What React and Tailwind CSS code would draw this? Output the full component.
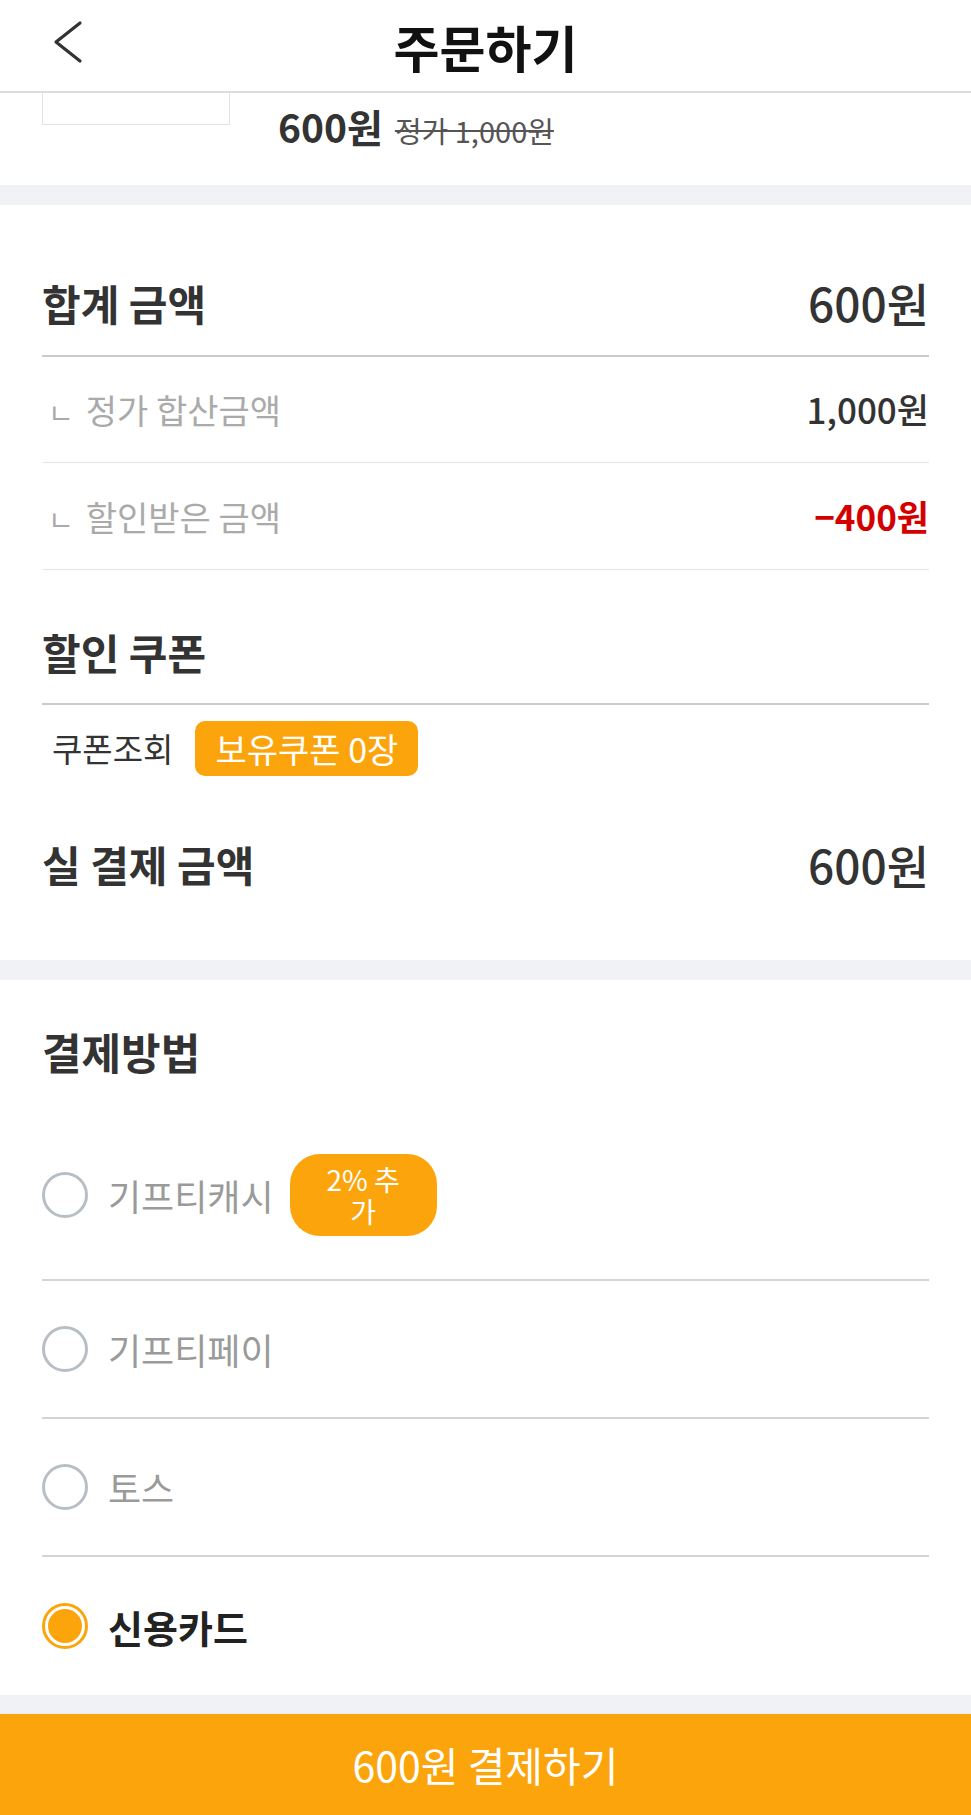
const ORANGE = "bg-[#fca40c]";

const Radio = ({ checked }) =>
    checked ? (
        <span className="w-[46px] h-[46px] rounded-full border-[3px] border-[#fca40c] p-[3px] bg-white shrink-0">
            <span className="block w-full h-full rounded-full bg-[#fca40c]" />
        </span>
    ) : (
        <span className="w-[46px] h-[46px] rounded-full border-[3px] border-[#b8bec5] shrink-0" />
    );

const PayRow = ({ label, checked, badge, tall, last }) => (
    <div
        className={
            "flex items-center gap-[20px] " +
            (tall ? "h-[207px] pt-[36px] " : "h-[138px] ") +
            (last ? "" : "border-b-2 border-[#d4d4d4]")
        }
    >
        <Radio checked={checked} />
        <span
            className={
                checked
                    ? "text-[38px] font-bold text-[#222]"
                    : "text-[36px] text-[#9a9a9a]"
            }
        >
            {label}
        </span>
        {badge && (
            <span className={"w-[147px] h-[82px] rounded-[30px] flex items-center justify-center text-center text-white text-[28px] leading-[32px] ml-[-4px] " + ORANGE}>
                2% 추<br />가
            </span>
        )}
    </div>
);

export default function App() {
    return (
        <div className="w-[971px] bg-white font-['Noto_Sans_CJK_KR','Noto_Sans',sans-serif] text-[#333]">
            {/* header */}
            <div className="relative h-[93px] flex items-center justify-center border-b-2 border-[#dcdcdc]">
                <button className="absolute left-[50px] top-[20px]">
                    <svg width="36" height="44" viewBox="0 0 36 44" fill="none">
                        <path d="M30 3 L6 22 L30 41" stroke="#333" strokeWidth="3.2" strokeLinecap="round" strokeLinejoin="round" />
                    </svg>
                </button>
                <h1 className="text-[50px] font-bold text-[#111] leading-none">주문하기</h1>
            </div>

            {/* product (scrolled) */}
            <div className="h-[92px] flex px-[42px]">
                <div className="w-[188px] h-[32px] border border-t-0 border-[#e3e3e3]" />
                <div className="ml-[48px] pt-[4px] flex items-baseline">
                    <span className="text-[39px] font-bold text-[#333]">600원</span>
                    <span className="ml-[12px] text-[29px] text-[#555] line-through">정가 1,000원</span>
                </div>
            </div>
            <div className="h-[20px] bg-[#f1f2f6]" />

            {/* 금액 */}
            <div className="px-[42px] pt-[44px]">
                <div className="h-[108px] flex items-center justify-between border-b-2 border-[#cbcbcb]">
                    <span className="text-[42px] font-bold">합계 금액</span>
                    <span className="text-[46px] font-medium">600원</span>
                </div>
                <div className="h-[106px] flex items-center justify-between border-b border-[#e6e6e6]">
                    <span className="text-[34px] text-[#aaaaaa]"><span className="text-[28px] mr-[12px] ml-[6px]">ㄴ</span>정가 합산금액</span>
                    <span className="text-[35px] font-medium">1,000원</span>
                </div>
                <div className="h-[107px] flex items-center justify-between border-b border-[#e6e6e6]">
                    <span className="text-[34px] text-[#aaaaaa]"><span className="text-[28px] mr-[12px] ml-[6px]">ㄴ</span>할인받은 금액</span>
                    <span className="text-[35px] font-bold text-[#d40000]">−400원</span>
                </div>
                <div className="h-[135px] flex items-end pb-[26px] border-b-2 border-[#cbcbcb]">
                    <span className="text-[42px] font-bold leading-[50px]">할인 쿠폰</span>
                </div>
                <div className="pt-[16px] flex items-center">
                    <span className="ml-[10px] text-[33px] text-[#333]">쿠폰조회</span>
                    <span className={"ml-[22px] h-[55px] px-[20px] rounded-[10px] flex items-center text-white text-[34px] " + ORANGE}>
                        보유쿠폰 0장
                    </span>
                </div>
                <div className="mt-[64px] pb-[72px] flex items-center justify-between">
                    <span className="text-[42px] font-bold leading-[48px]">실 결제 금액</span>
                    <span className="text-[46px] font-medium leading-[48px]">600원</span>
                </div>
            </div>
            <div className="h-[20px] bg-[#f1f2f6]" />

            {/* 결제방법 */}
            <div className="px-[42px] pt-[48px]">
                <h2 className="text-[43px] font-bold leading-[46px] text-[#333]">결제방법</h2>
                <PayRow label="기프티캐시" badge tall />
                <PayRow label="기프티페이" />
                <PayRow label="토스" />
                <PayRow label="신용카드" checked last />
            </div>
            <div className="h-[19px] bg-[#f1f2f6]" />

            <button className={"w-full h-[101px] flex items-center justify-center text-white text-[41px] " + ORANGE}>
                600원 결제하기
            </button>
        </div>
    );
}
